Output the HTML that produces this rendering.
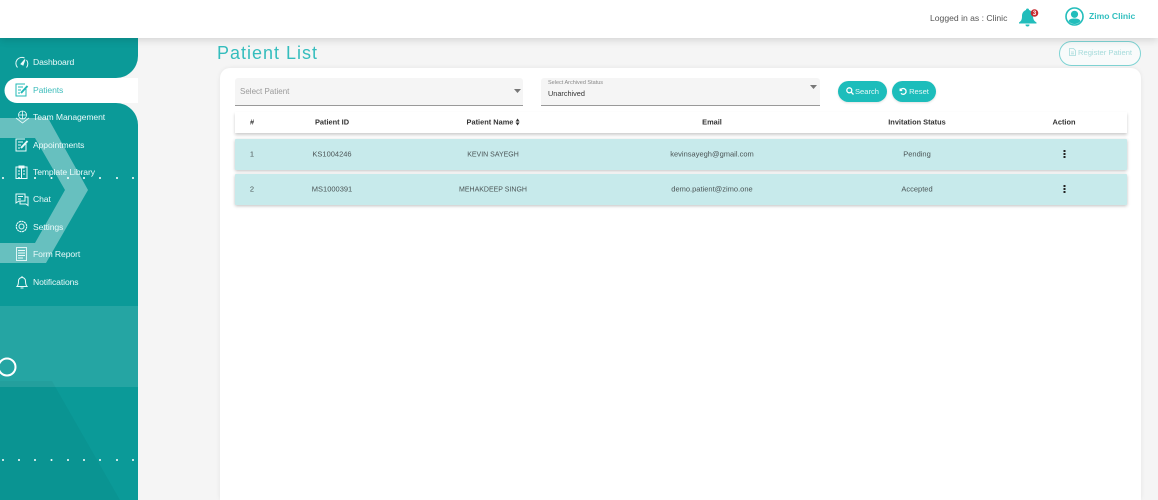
<!DOCTYPE html>
<html><head><meta charset="utf-8">
<style>
*{box-sizing:border-box}
html,body{margin:0;padding:0;width:1158px;height:500px;overflow:hidden;background:#f5f5f5;font-family:"Liberation Sans",sans-serif;color:#444}
.a{position:absolute;white-space:nowrap}
#hdr{position:absolute;left:0;top:0;width:1158px;height:38px;background:#fff;box-shadow:0 2px 8px rgba(0,0,0,.14);z-index:5}
#card{position:absolute;left:220px;top:68px;width:921px;height:432px;background:#fff;border-radius:10px 10px 0 0;box-shadow:0 0 5px rgba(0,0,0,.07)}
.nav{position:absolute;left:33px;font-size:8.600px;color:#eafafa;white-space:nowrap;letter-spacing:-.1px;transform:translateY(-50%)}
.ic{position:absolute;left:14px}
.sel{position:absolute;background:#f5f5f5;border-bottom:1px solid #999;border-radius:3px 3px 0 0}
.btn{position:absolute;top:81px;height:21px;background:#1dbdbb;border-radius:11px;color:#e6f8f8;font-size:7.600px;line-height:21px;text-align:center;box-shadow:0 1px 2px rgba(0,0,0,.12)}
.row{position:absolute;left:235px;width:892px;height:31px;background:#c7eaeb;box-shadow:0 1px 3px rgba(0,0,0,.25);border-radius:1px}
.th,.td{position:absolute;transform:translate(-50%,-50%);white-space:nowrap}
.th{font-size:7.400px;font-weight:bold;color:#333;top:122px}
.td{font-size:7.500px;color:#4b5556}
.up{font-size:7px;margin-top:1px}
.tr{position:absolute;left:235px;top:112px;width:892px;height:21px;background:#fff;box-shadow:0 2px 3px rgba(0,0,0,.2)}
</style></head><body>

<svg class="a" style="left:0;top:38px;z-index:1" width="138" height="462" viewBox="0 38 138 462">
<rect x="0" y="70" width="40" height="40" fill="#0b9a98"/>
<path fill="#0b9a98" d="M0 38H138V56A22 22 0 0 1 116 78H0Z"/>
<path fill="#0b9a98" d="M0 103H116A22 22 0 0 1 138 125V500H0Z"/>
<path fill="#fff" d="M138 78H17A12.500 12.500 0 0 0 17 103H138Z"/>
<path fill="#fff" fill-opacity=".38" d="M0 118H48L88 190L46 263H0V243H35L65 190L35 138H0Z"/>
<rect x="0" y="306" width="138" height="81" fill="#fff" fill-opacity=".11"/>
<path fill="#000" fill-opacity=".035" d="M0 381H52L120 500H0Z"/>
<circle cx="7" cy="367" r="8.500" fill="none" stroke="#fff" stroke-width="2"/>
<g fill="#fff">
<circle cx="3" cy="178" r="1"/><circle cx="19" cy="178" r="1"/><circle cx="35" cy="178" r="1"/><circle cx="51.500" cy="178" r="1"/><circle cx="68" cy="178" r="1"/><circle cx="84" cy="178" r="1"/><circle cx="100" cy="178" r="1"/><circle cx="117" cy="178" r="1"/><circle cx="133" cy="178" r="1"/>
<circle cx="3" cy="460" r="1"/><circle cx="19" cy="460" r="1"/><circle cx="35" cy="460" r="1"/><circle cx="51.500" cy="460" r="1"/><circle cx="68" cy="460" r="1"/><circle cx="84" cy="460" r="1"/><circle cx="100" cy="460" r="1"/><circle cx="117" cy="460" r="1"/><circle cx="133" cy="460" r="1"/>
</g>
</svg>

<div style="position:absolute;left:0;top:0;width:138px;height:500px;z-index:2">
<svg class="ic" style="top:56px;left:15px" width="14" height="13" viewBox="0 0 14 13" fill="none" stroke="#eafafa" stroke-width="1"><path d="M2.500 11.500A6 6 0 0 1 9.500 2M11.500 4A6 6 0 0 1 11.500 11.500"/><path d="M6 8L10 3.500L8 9Z" fill="#eafafa"/></svg>
<div class="nav" style="top:62px">Dashboard</div>

<svg class="ic" style="top:83px;left:15px" width="14" height="14" viewBox="0 0 14 14" fill="none" stroke="#22b8b6" stroke-width="1"><path d="M11 6V13H1V1H10"/><path d="M3 4H8M3 7H6M3 10H5"/><path d="M6 10L12.500 3" stroke-width="2"/></svg>
<div class="nav" style="top:90px;color:#3fbdbc">Patients</div>

<svg class="ic" style="top:110px;left:15px" width="15" height="14" viewBox="0 0 15 14" fill="none" stroke="#eafafa" stroke-width=".8"><circle cx="7.500" cy="5" r="4"/><path d="M3.500 5H11.500M7.500 1V9M1 8L7.500 13L14 8"/></svg>
<div class="nav" style="top:117px">Team Management</div>

<svg class="ic" style="top:138px;left:15px" width="14" height="14" viewBox="0 0 14 14" fill="none" stroke="#eafafa" stroke-width="1"><path d="M11 6V13H1V1H10"/><path d="M3 4H8M3 7H6M3 10H5"/><path d="M6 10L12.500 3" stroke-width="2"/></svg>
<div class="nav" style="top:145px">Appointments</div>

<svg class="ic" style="top:165px;left:15px" width="13" height="14" viewBox="0 0 13 14" fill="none" stroke="#eafafa" stroke-width="1"><rect x="1" y="2" width="11" height="11.500"/><path d="M4 1H9V3H4ZM6.500 3V13M3 6H5M8 6H10M3 9H5M8 9H10"/></svg>
<div class="nav" style="top:172px">Template Library</div>

<svg class="ic" style="top:193px;left:15px" width="14" height="14" viewBox="0 0 14 14" fill="none" stroke="#eafafa" stroke-width="1"><path d="M1 1H10V8H4L1 10Z"/><path d="M3 3.500H8M3 6H6"/><path d="M10 4H13V12.500L11 11H5V8"/></svg>
<div class="nav" style="top:199px">Chat</div>

<svg class="ic" style="top:220px;left:15px" width="13" height="13" viewBox="0 0 13 13" fill="none" stroke="#eafafa"><circle cx="6.500" cy="6.500" r="2.500"/><circle cx="6.500" cy="6.500" r="5.200" stroke-width="1.100" stroke-dasharray="2.200 .5"/></svg>
<div class="nav" style="top:227px">Settings</div>

<svg class="ic" style="top:247px;left:16px" width="11" height="14" viewBox="0 0 11 14" fill="none" stroke="#eafafa" stroke-width=".9"><rect x=".5" y=".5" width="10" height="13"/><path d="M2 3.500H9M2 6H9M2 8.500H9M2 11H7"/></svg>
<div class="nav" style="top:254px">Form Report</div>

<svg class="ic" style="top:275px;left:16px" width="12" height="14" viewBox="0 0 12 14" fill="none" stroke="#eafafa" stroke-width="1"><path d="M1 11.500C2.500 10 2.500 8 2.500 6A3.500 3.500 0 0 1 9.500 6C9.500 8 9.500 10 11 11.500Z"/><path d="M6 1V2.500M4.500 13H7.500"/></svg>
<div class="nav" style="top:282px">Notifications</div>
</div>

<div id="hdr">
<div class="a" style="left:930px;top:13px;font-size:8.600px;line-height:11px;color:#555">Logged in as : Clinic</div>
<svg class="a" style="left:1018px;top:7px" width="22" height="20" viewBox="0 0 22 20"><path fill="#22bdbb" d="M9.500 1.500C10.500 1.500 11 2 11 3C14 4 15 6 15 9C15 12 16 14 18.500 15.500V16.500H1V15.500C3.500 14 4 12 4 9C4 6 5.500 4 8 3C8 2 8.500 1.500 9.500 1.500Z"/><path fill="#22bdbb" d="M7.500 17.500H11.500A2 2 0 0 1 7.500 17.500Z"/><circle cx="16.500" cy="6" r="3.800" fill="#c62b30"/><text x="16.500" y="8" font-size="6" font-weight="bold" text-anchor="middle" fill="#fff" font-family="Liberation Sans">3</text></svg>
<svg class="a" style="left:1065px;top:7px" width="19" height="19" viewBox="0 0 19 19"><circle cx="9.500" cy="9.500" r="8.500" fill="none" stroke="#22bdbb" stroke-width="1.600"/><circle cx="9.500" cy="7.300" r="3.600" fill="#22bdbb"/><path fill="#22bdbb" d="M3.500 14C4.500 12 6.500 11.500 9.500 11.500C12.500 11.500 14.500 12 15.500 14C14 16 12 17 9.500 17C7 17 5 16 3.500 14Z"/></svg>
<div class="a" style="left:1089px;top:11px;font-size:8.600px;line-height:11px;font-weight:bold;color:#31bfbf">Zimo Clinic</div>
</div>

<div class="a" style="left:217px;top:43px;font-size:18px;line-height:21px;letter-spacing:1px;color:#35bdbd">Patient List</div>

<div class="a" style="left:1059px;top:41px;width:82px;height:25px;border:1.500px solid #7fd4d4;border-radius:13px;background:#f8fbfb;color:#a5dbdb;font-size:7.600px;line-height:22px;padding-left:9px"><svg width="7" height="8" viewBox="0 0 7 8" fill="none" stroke="#a5dbdb" stroke-width=".8" style="vertical-align:-1px;margin-right:2px"><path d="M.5.5H4.500L6.500 2.500V7.500H.5ZM2 4H5M2 5.800H5"/></svg>Register Patient</div>

<div id="card"></div>

<div class="sel" style="left:235px;top:78px;width:288px;height:28px"></div>
<div class="a" style="left:240px;top:87px;font-size:8px;line-height:10px;color:#9a9a9a">Select Patient</div>
<svg class="a" style="left:514px;top:89px" width="7" height="4"><path d="M0 0H7L3.500 4Z" fill="#777"/></svg>

<div class="sel" style="left:541px;top:78px;width:279px;height:28px"></div>
<div class="a" style="left:548px;top:80px;font-size:5.500px;line-height:7px;color:#888">Select Archived Status</div>
<div class="a" style="left:548px;top:89px;font-size:7.300px;line-height:10px;color:#333">Unarchived</div>
<svg class="a" style="left:810px;top:85px" width="7" height="4"><path d="M0 0H7L3.500 4Z" fill="#777"/></svg>

<div class="btn" style="left:838px;width:49px"><svg width="8" height="8" viewBox="0 0 8 8" fill="none" stroke="#fff" stroke-width="1.300" style="vertical-align:-1px;margin-right:1px"><circle cx="3.300" cy="3.300" r="2.500"/><path d="M5.200 5.200L7.500 7.500"/></svg>Search</div>
<div class="btn" style="left:892px;width:44px"><svg width="8" height="8" viewBox="0 0 8 8" fill="none" stroke="#fff" stroke-width="1.300" style="vertical-align:-1px;margin-right:2px"><path d="M1.200 1.500V3.500H3.200"/><path d="M1.500 3.300A2.900 2.900 0 1 1 2 6.300"/></svg>Reset</div>

<div class="tr"></div>
<div class="th" style="left:252px">#</div>
<div class="th" style="left:332px">Patient ID</div>
<div class="th" style="left:493px">Patient Name <svg width="4" height="7" viewBox="0 0 4 7" style="vertical-align:-1px"><path d="M0 3L2 0L4 3ZM0 4L2 7L4 4Z" fill="#333"/></svg></div>
<div class="th" style="left:712px">Email</div>
<div class="th" style="left:917px">Invitation Status</div>
<div class="th" style="left:1064px">Action</div>

<div class="row" style="top:139px"></div>
<div class="td" style="left:252px;top:154px">1</div>
<div class="td" style="left:332px;top:154px">KS1004246</div>
<div class="td up" style="left:493px;top:154px">KEVIN SAYEGH</div>
<div class="td" style="left:712px;top:154px">kevinsayegh@gmail.com</div>
<div class="td" style="left:917px;top:154px">Pending</div>
<svg class="a" style="left:1063px;top:150px" width="3" height="8"><rect x=".5" y="0" width="2" height="2" fill="#222"/><rect x=".5" y="3" width="2" height="2" fill="#222"/><rect x=".5" y="6" width="2" height="2" fill="#222"/></svg>

<div class="row" style="top:174px"></div>
<div class="td" style="left:252px;top:189px">2</div>
<div class="td" style="left:332px;top:189px">MS1000391</div>
<div class="td up" style="left:493px;top:189px">MEHAKDEEP SINGH</div>
<div class="td" style="left:712px;top:189px">demo.patient@zimo.one</div>
<div class="td" style="left:917px;top:189px">Accepted</div>
<svg class="a" style="left:1063px;top:185px" width="3" height="8"><rect x=".5" y="0" width="2" height="2" fill="#222"/><rect x=".5" y="3" width="2" height="2" fill="#222"/><rect x=".5" y="6" width="2" height="2" fill="#222"/></svg>

</body></html>
